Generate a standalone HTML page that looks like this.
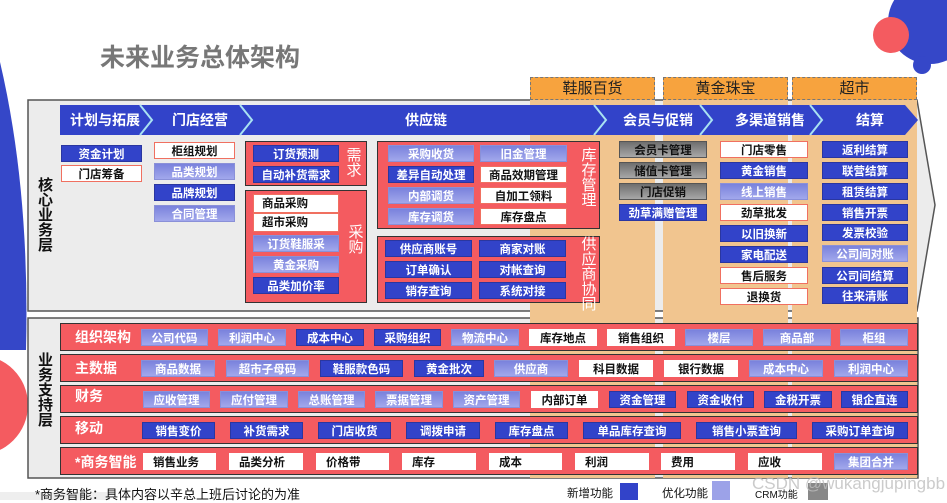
<!DOCTYPE html>
<html><head><meta charset="utf-8">
<style>
*{margin:0;padding:0;box-sizing:border-box}
body{width:947px;height:500px;overflow:hidden;background:#fff;position:relative;font-family:"Liberation Sans","Noto Sans CJK SC",sans-serif}
.a{position:absolute}
.x{position:absolute;height:17px;font-size:11.5px;font-weight:bold;line-height:18px;text-align:center;white-space:nowrap;overflow:hidden}
.d{background:#3243c9;color:#fff;border:1px solid #2a36a0}
.l{background:linear-gradient(#7a82dc,#a2a8ec);color:#fff;border:1px solid #8a90d8}
.w{background:#fff;color:#111;border:1px solid #f07060}
.g{background:linear-gradient(#6e6e6e,#a8a8a8);color:#111;border:1px solid #555}
.rb{position:absolute;background:#f45b60;border:1.5px solid #333}
.vt{position:absolute;color:#fff;font-size:15px;line-height:15px;width:16px;text-align:center}
.row{position:absolute;left:60px;width:858px;height:28px;background:#f45b60;border:1.5px solid #333}
.rl{position:absolute;left:75px;color:#fff;font-size:14px;font-weight:bold;line-height:28px}
.rx{top:6px;height:18px}
.col{position:absolute;top:100px;height:378px;background:#f1c58f}
.hd{position:absolute;top:77px;height:23px;background:#f7a33e;border:1px dashed #777;color:#222;font-size:15px;text-align:center;line-height:22px}
</style></head><body>
<svg class="a" style="left:0;top:0" width="947" height="500">
<path d="M0,62 Q30,190 26,350 L0,350 Z" fill="#3547c8"/>
<circle cx="-22" cy="405" r="50" fill="#f45b60"/>
<circle cx="930" cy="22" r="42" fill="#3547c8"/>
<circle cx="891" cy="35" r="18" fill="#f45b60"/>
<circle cx="922" cy="65" r="9" fill="#3547c8"/>
<polygon points="28,100 917,100 935,205 917,311 28,311" fill="#ececec" stroke="#555" stroke-width="1.5"/>
<rect x="28" y="318" width="890" height="160" fill="#ececec" stroke="#555" stroke-width="1.5"/>
</svg>
<div class="a" style="left:100px;top:38px;font-size:25px;font-weight:bold;color:#777">未来业务总体架构</div>

<div class="col" style="left:530px;width:125px"></div>
<div class="col" style="left:663px;width:125px"></div>
<div class="col" style="left:792px;width:125px"></div>
<div class="hd" style="left:530px;width:125px">鞋服百货</div>
<div class="hd" style="left:663px;width:125px">黄金珠宝</div>
<div class="hd" style="left:792px;width:125px">超市</div>

<svg class="a" style="left:0;top:0" width="947" height="320">
<polygon points="60,105 905,105 918,120 905,135 60,135" fill="#3243c9"/>
<g fill="none" stroke="#a9e2f2" stroke-width="2">
<polyline points="140,105 152,120 140,135"/>
<polyline points="240,105 252,120 240,135"/>
<polyline points="594,105 606,120 594,135"/>
<polyline points="700,105 712,120 700,135"/>
<polyline points="810,105 822,120 810,135"/>
</g>
</svg>
<div class="a" style="left:60px;top:105px;width:880px;height:30px;color:#fff;font-size:14px;font-weight:bold;line-height:30px">
<span class="a" style="left:10px">计划与拓展</span>
<span class="a" style="left:112px">门店经营</span>
<span class="a" style="left:345px">供应链</span>
<span class="a" style="left:563px">会员与促销</span>
<span class="a" style="left:675px">多渠道销售</span>
<span class="a" style="left:796px">结算</span>
</div>

<div class="a" style="left:38px;top:178px;width:16px;font-size:15px;font-weight:bold;line-height:15px;color:#111">核心业务层</div>

<div class="x d" style="left:61px;top:145px;width:81px">资金计划</div>
<div class="x w" style="left:61px;top:165px;width:81px">门店筹备</div>
<div class="x w" style="left:154px;top:142px;width:81px">柜组规划</div>
<div class="x l" style="left:154px;top:163px;width:81px">品类规划</div>
<div class="x d" style="left:154px;top:184px;width:81px">品牌规划</div>
<div class="x l" style="left:154px;top:205px;width:81px">合同管理</div>

<div class="rb" style="left:245px;top:141px;width:122px;height:45px"></div>
<div class="x d" style="left:253px;top:145px;width:86px">订货预测</div>
<div class="x d" style="left:253px;top:166px;width:86px">自动补货需求</div>
<div class="vt" style="left:346px;top:148px">需求</div>

<div class="rb" style="left:245px;top:190px;width:122px;height:113px"></div>
<div class="x w" style="left:253px;top:194px;width:86px;height:19px;text-align:left;padding-left:8px">商品采购</div>
<div class="x w" style="left:253px;top:213px;width:86px;height:19px;text-align:left;padding-left:8px">超市采购</div>
<div class="x l" style="left:253px;top:235px;width:86px">订货鞋服采</div>
<div class="x l" style="left:253px;top:256px;width:86px">黄金采购</div>
<div class="x d" style="left:253px;top:277px;width:86px">品类加价率</div>
<div class="vt" style="left:348px;top:225px">采购</div>

<div class="rb" style="left:377px;top:141px;width:223px;height:88px"></div>
<div class="x l" style="left:388px;top:145px;width:86px">采购收货</div>
<div class="x d" style="left:388px;top:166px;width:86px">差异自动处理</div>
<div class="x l" style="left:388px;top:187px;width:86px">内部调货</div>
<div class="x l" style="left:388px;top:208px;width:86px">库存调货</div>
<div class="x l" style="left:480px;top:145px;width:87px">旧金管理</div>
<div class="x w" style="left:480px;top:166px;width:87px">商品效期管理</div>
<div class="x w" style="left:480px;top:187px;width:87px">自加工领料</div>
<div class="x w" style="left:480px;top:208px;width:87px">库存盘点</div>
<div class="vt" style="left:581px;top:148px">库存管理</div>

<div class="rb" style="left:377px;top:236px;width:223px;height:67px"></div>
<div class="x d" style="left:385px;top:240px;width:87px">供应商账号</div>
<div class="x d" style="left:385px;top:261px;width:87px">订单确认</div>
<div class="x d" style="left:385px;top:282px;width:87px">销存查询</div>
<div class="x d" style="left:479px;top:240px;width:87px">商家对账</div>
<div class="x d" style="left:479px;top:261px;width:87px">对帐查询</div>
<div class="x d" style="left:479px;top:282px;width:87px">系统对接</div>
<div class="vt" style="left:581px;top:237px">供应商协同</div>

<div class="x g" style="left:619px;top:141px;width:88px">会员卡管理</div>
<div class="x g" style="left:619px;top:162px;width:88px">储值卡管理</div>
<div class="x g" style="left:619px;top:183px;width:88px">门店促销</div>
<div class="x d" style="left:619px;top:204px;width:88px">劲草满赠管理</div>

<div class="x w" style="left:720px;top:141px;width:88px">门店零售</div>
<div class="x d" style="left:720px;top:162px;width:88px">黄金销售</div>
<div class="x l" style="left:720px;top:183px;width:88px">线上销售</div>
<div class="x w" style="left:720px;top:204px;width:88px">劲草批发</div>
<div class="x d" style="left:720px;top:225px;width:88px">以旧换新</div>
<div class="x d" style="left:720px;top:246px;width:88px">家电配送</div>
<div class="x w" style="left:720px;top:267px;width:88px">售后服务</div>
<div class="x w" style="left:720px;top:288px;width:88px">退换货</div>

<div class="x d" style="left:822px;top:141px;width:86px">返利结算</div>
<div class="x d" style="left:822px;top:162px;width:86px">联营结算</div>
<div class="x d" style="left:822px;top:183px;width:86px">租赁结算</div>
<div class="x d" style="left:822px;top:204px;width:86px">销售开票</div>
<div class="x d" style="left:822px;top:224px;width:86px">发票校验</div>
<div class="x l" style="left:822px;top:245px;width:86px">公司间对账</div>
<div class="x d" style="left:822px;top:267px;width:86px">公司间结算</div>
<div class="x d" style="left:822px;top:287px;width:86px">往来清账</div>

<div class="a" style="left:38px;top:353px;width:16px;font-size:15px;font-weight:bold;line-height:15px;color:#111">业务支持层</div>

<div class="row" style="top:323px"></div><div class="rl" style="top:323px">组织架构</div>
<div class="row" style="top:354px"></div><div class="rl" style="top:354px">主数据</div>
<div class="row" style="top:385px"></div><div class="rl" style="top:382px">财务</div>
<div class="row" style="top:416px"></div><div class="rl" style="top:414px">移动</div>
<div class="row" style="top:447px"></div><div class="rl" style="top:448px">*商务智能</div>

<div class="x l" style="left:141px;top:329px;width:67px">公司代码</div>
<div class="x l" style="left:218px;top:329px;width:68px">利润中心</div>
<div class="x d" style="left:296px;top:329px;width:68px">成本中心</div>
<div class="x d" style="left:374px;top:329px;width:67px">采购组织</div>
<div class="x l" style="left:451px;top:329px;width:68px">物流中心</div>
<div class="x w" style="left:529px;top:329px;width:68px;border-color:#fff">库存地点</div>
<div class="x w" style="left:607px;top:329px;width:68px;border-color:#fff">销售组织</div>
<div class="x l" style="left:685px;top:329px;width:68px">楼层</div>
<div class="x l" style="left:763px;top:329px;width:68px">商品部</div>
<div class="x l" style="left:840px;top:329px;width:68px">柜组</div>

<div class="x l" style="left:141px;top:360px;width:74px">商品数据</div>
<div class="x l" style="left:226px;top:360px;width:83px">超市子母码</div>
<div class="x d" style="left:320px;top:360px;width:83px">鞋服款色码</div>
<div class="x d" style="left:414px;top:360px;width:70px">黄金批次</div>
<div class="x l" style="left:494px;top:360px;width:74px">供应商</div>
<div class="x w" style="left:579px;top:360px;width:74px;border-color:#fff">科目数据</div>
<div class="x w" style="left:664px;top:360px;width:74px;border-color:#fff">银行数据</div>
<div class="x l" style="left:749px;top:360px;width:74px">成本中心</div>
<div class="x l" style="left:834px;top:360px;width:74px">利润中心</div>

<div class="x l" style="left:143px;top:391px;width:67px">应收管理</div>
<div class="x l" style="left:220px;top:391px;width:68px">应付管理</div>
<div class="x l" style="left:298px;top:391px;width:67px">总账管理</div>
<div class="x l" style="left:375px;top:391px;width:68px">票据管理</div>
<div class="x l" style="left:453px;top:391px;width:67px">资产管理</div>
<div class="x w" style="left:531px;top:391px;width:67px;border-color:#fff">内部订单</div>
<div class="x d" style="left:609px;top:391px;width:67px">资金管理</div>
<div class="x d" style="left:687px;top:391px;width:67px">资金收付</div>
<div class="x d" style="left:764px;top:391px;width:68px">金税开票</div>
<div class="x d" style="left:841px;top:391px;width:67px">银企直连</div>

<div class="x d" style="left:142px;top:422px;width:73px">销售变价</div>
<div class="x d" style="left:230px;top:422px;width:73px">补货需求</div>
<div class="x d" style="left:318px;top:422px;width:73px">门店收货</div>
<div class="x d" style="left:406px;top:422px;width:74px">调拨申请</div>
<div class="x d" style="left:495px;top:422px;width:73px">库存盘点</div>
<div class="x d" style="left:583px;top:422px;width:98px">单品库存查询</div>
<div class="x d" style="left:696px;top:422px;width:101px">销售小票查询</div>
<div class="x d" style="left:812px;top:422px;width:96px">采购订单查询</div>

<div class="x w" style="left:143px;top:453px;width:73px;border-color:#fff;text-align:left;padding-left:9px">销售业务</div>
<div class="x w" style="left:229px;top:453px;width:74px;border-color:#fff;text-align:left;padding-left:9px">品类分析</div>
<div class="x w" style="left:316px;top:453px;width:73px;border-color:#fff;text-align:left;padding-left:9px">价格带</div>
<div class="x w" style="left:402px;top:453px;width:74px;border-color:#fff;text-align:left;padding-left:9px">库存</div>
<div class="x w" style="left:489px;top:453px;width:73px;border-color:#fff;text-align:left;padding-left:9px">成本</div>
<div class="x w" style="left:575px;top:453px;width:74px;border-color:#fff;text-align:left;padding-left:9px">利润</div>
<div class="x w" style="left:661px;top:453px;width:74px;border-color:#fff;text-align:left;padding-left:9px">费用</div>
<div class="x w" style="left:748px;top:453px;width:74px;border-color:#fff;text-align:left;padding-left:9px">应收</div>
<div class="x l" style="left:834px;top:453px;width:74px">集团合并</div>

<div class="a" style="left:0;top:492px;width:110px;height:8px;background:#eee"></div>
<div class="a" style="left:35px;top:484px;font-size:13px;color:#111">*商务智能：具体内容以辛总上班后讨论的为准</div>
<div class="a" style="left:567px;top:485px;font-size:11.5px;color:#111">新增功能</div>
<div class="a" style="left:620px;top:483px;width:18px;height:17px;background:#3243c9"></div>
<div class="a" style="left:662px;top:485px;font-size:11.5px;color:#111">优化功能</div>
<div class="a" style="left:712px;top:481px;width:18px;height:19px;background:#9ca2e8"></div>
<div class="a" style="left:755px;top:486px;font-size:10px;color:#111">CRM功能</div>
<div class="a" style="left:808px;top:483px;width:20px;height:17px;background:#888"></div>
<div class="a" style="left:752px;top:474px;font-size:17px;color:rgba(190,190,190,0.8)">CSDN @wukangjupingbb</div>
</body></html>
